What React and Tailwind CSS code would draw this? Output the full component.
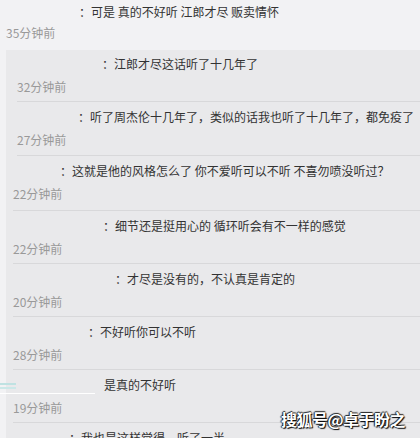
const replies = [
  { text: "：江郎才尽这话听了十几年了", textX: "pl-[85px]", pad: "pl-[11px]", h: "h-[52px]", pt: "pt-[5px]", time: "32分钟前" },
  { text: "：听了周杰伦十几年了，类似的话我也听了十几年了，都免疫了", textX: "pl-[61px]", pad: "pl-[11px]", h: "h-[54px]", pt: "pt-[6px]", time: "27分钟前" },
  { text: "：这就是他的风格怎么了 你不爱听可以不听 不喜勿喷没听过？", textX: "pl-[47px]", pad: "pl-[7px]", h: "h-[55px]", pt: "pt-[6px]", time: "22分钟前" },
  { text: "：细节还是挺用心的 循环听会有不一样的感觉", textX: "pl-[90px]", pad: "pl-[7px]", h: "h-[53px]", pt: "pt-[6px]", time: "22分钟前" },
  { text: "：才尽是没有的，不认真是肯定的", textX: "pl-[102px]", pad: "pl-[7px]", h: "h-[53px]", pt: "pt-[6px]", time: "20分钟前" },
  { text: "：不好听你可以不听", textX: "pl-[75px]", pad: "pl-[7px]", h: "h-[53px]", pt: "pt-[6px]", time: "28分钟前" },
  { text: "是真的不好听", textX: "pl-[91px]", pad: "pl-[7px]", h: "h-[53px]", pt: "pt-[6px]", time: "19分钟前" },
  { text: "：我也是这样觉得，听了一半", textX: "pl-[56px]", pad: "pl-[7px]", h: "h-[53px]", pt: "pt-[6px]", time: "18分钟前" },
];

function Reply({ r }) {
  return (
    <div className={`flex ${r.pad}`}>
      <div className={`flex flex-1 flex-col gap-[5px] ${r.h} ${r.pt} border-b border-[#d8d8da]`}>
        <div className={`${r.textX} text-[#333] whitespace-nowrap`}>{r.text}</div>
        <div className="text-[#999]">{r.time}</div>
      </div>
    </div>
  );
}

export default function App() {
  return (
    <div className="relative flex flex-col w-[420px] h-[438px] overflow-hidden bg-[#f2f2f4] font-['Noto_Sans_CJK_SC',sans-serif] text-[12px] leading-[18px]">
      {/* top comment */}
      <div className="flex flex-col gap-[3px] h-[50px] shrink-0 pt-[3px]">
        <div className="pl-[79px] text-[#333]">：可是 真的不好听 江郎才尽 贩卖情怀</div>
        <div className="pl-[6px] text-[#999]">35分钟前</div>
      </div>

      {/* replies */}
      <div className="flex flex-col shrink-0 ml-[6px] bg-[#e9e9eb]">
        {replies.map((r, i) => (
          <Reply key={i} r={r} />
        ))}
      </div>

      {/* screenshot artifacts */}
      <div className="absolute left-0 top-[383px] w-[16px] h-[2px] bg-[#bfe2e2]" />
      <div className="absolute left-0 top-[387px] w-[16px] h-[2px] bg-[#cbe8e8]" />
      <div className="absolute left-0 top-[393px] w-[95px] h-[1px] bg-white" />

      {/* watermark */}
      <div className="absolute right-[15px] top-[409px] text-[16px] leading-[20px] font-bold text-white tracking-[-0.5px] [text-shadow:1px_1px_1px_#000,-1px_0_1px_#222,0_-1px_1px_#222]">
        搜狐号@卓于盼之
      </div>
    </div>
  );
}
